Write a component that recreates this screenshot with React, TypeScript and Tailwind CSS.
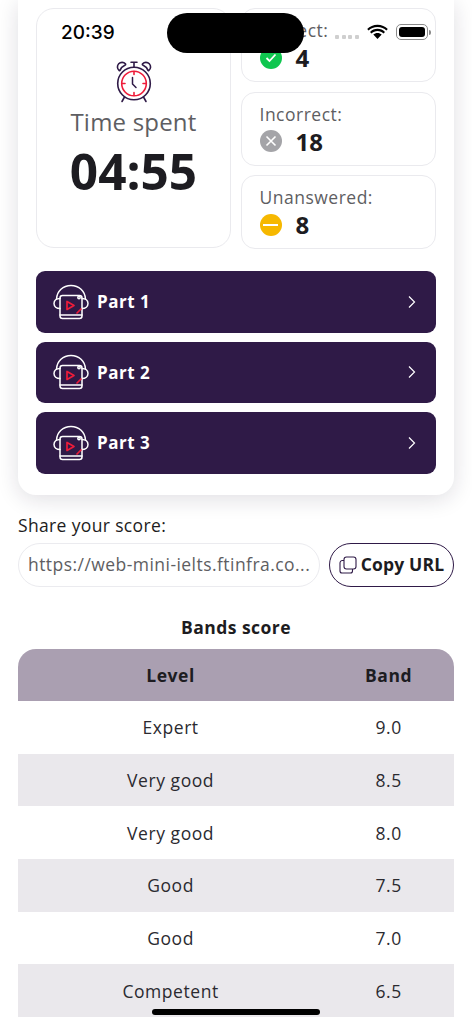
const font = "font-['Open_Sans',sans-serif]";

function Clock() {
  return (
    <svg width="36" height="44" viewBox="0 0 36 44" fill="none" strokeLinecap="round" strokeLinejoin="round">
      <g stroke="#2f1a47" strokeWidth="1.600">
        <circle cx="18" cy="24.500" r="16.300" />
        <path d="M3.200 11.500C1 10 .9 6.700 2.700 4.800c1.800-1.900 5-1.900 6.700-.1.400.5.300 1-.2 1.300-2.400 1.100-4.300 3-5.200 5.400-.2.300-.5.300-.8.100z" />
        <path d="M32.800 11.500c2.200-1.500 2.300-4.800.5-6.700-1.800-1.900-5-1.900-6.700-.1-.4.500-.3 1 .2 1.300 2.400 1.100 4.300 3 5.200 5.400.2.300.5.300.8.100z" />
        <path d="M18 8V3.500M15 3.200h6M8.500 38l-2.500 4.500M27.500 38l2.500 4.500" />
      </g>
      <g stroke="#ee1c3a" strokeWidth="1.600">
        <circle cx="18" cy="24.500" r="12.300" />
        <path d="M18 12.500v3M18 33.500v3M6 24.500h3M27 24.500h3" />
      </g>
      <path d="M16.500 18.500v6.500l3.500 3.500" stroke="#2f1a47" strokeWidth="1.500" />
    </svg>
  );
}

function Headset() {
  return (
    <svg width="38" height="36" viewBox="0 0 38 36" fill="none" strokeLinecap="round" strokeLinejoin="round">
      <g stroke="#fff" strokeWidth="1.500">
        <path d="M4.500 15C5 7 11 1.500 19 1.500S33 7 33.500 15" />
        <path d="M8 14.500c-3.500 0-6 2-6 5s2.500 5 6 5" />
        <path d="M30 14.500c3.500 0 6 2 6 5s-2.500 5-6 5" />
        <path d="M8 14c0-1.500 1-2.500 2.500-2.500H27.500C29 11.500 30 12.500 30 14v18a2.500 2.500 0 0 1-2.500 2.500h-17A2.500 2.500 0 0 1 8 32z" />
        <path d="M8 31h22" />
        <circle cx="27" cy="13.500" r="1.200" />
      </g>
      <path d="M15 17.500v8l7-4z" stroke="#ee1c3a" strokeWidth="1.700" />
      <path d="M25 29l4-4" stroke="#ee1c3a" strokeWidth="1.700" />
    </svg>
  );
}

function Stat({ label, value, color, icon, gap }: { label: string; value: string; color: string; icon: React.ReactNode; gap: string }) {
  return (
    <div className="h-[74px] rounded-[14px] border border-[#eaeaee] pl-[17.500px] pt-[10px]">
      <div className="text-[17.500px] leading-[22px] tracking-[0.5px] text-[#5e5e62]">{label}</div>
      <div className={`flex items-center ${gap}`}>
        <span className={`flex h-[22px] w-[22px] items-center justify-center rounded-full ${color}`}>{icon}</span>
        <span className="text-[24px] font-bold leading-[33px] text-[#1d1c21]">{value}</span>
      </div>
    </div>
  );
}

function PartButton({ name }: { name: string }) {
  return (
    <div className="flex h-[61.500px] items-center rounded-[9px] bg-[#2f1a47] pl-[16px] pr-[19px] text-white">
      <Headset />
      <span className="ml-[7px] text-[17px] font-bold tracking-[0.5px]">{name}</span>
      <svg className="ml-auto" width="10" height="14" viewBox="0 0 10 14" fill="none">
        <path d="M2 1.500 7.500 7 2 12.500" stroke="#fff" strokeWidth="1.200" />
      </svg>
    </div>
  );
}

const rows = [
  ["Expert", "9.0"],
  ["Very good", "8.5"],
  ["Very good", "8.0"],
  ["Good", "7.5"],
  ["Good", "7.0"],
  ["Competent", "6.5"],
];

export default function App() {
  return (
    <div className={`${font} relative h-[1024px] w-[472px] overflow-hidden bg-white text-[#1d1c21]`}>
      <div className="mx-[18px] rounded-b-[18px] bg-white px-[18px] pb-[21px] pt-[8px] shadow-[0_4px_22px_rgba(30,20,50,0.14)]">
        <div className="grid grid-cols-2 gap-[10px]">
          <div className="flex h-[240px] flex-col items-center rounded-[18px] border border-[#eaeaee] pt-[50px]">
            <Clock />
            <div className="mt-[2px] text-[24px] leading-[33px] tracking-[0.2px] text-[#5e5e62]">Time spent</div>
            <div className="mt-[1px] text-[49.500px] font-bold leading-[65px] text-[#1d1c21]">04:55</div>
          </div>
          <div className="flex flex-col gap-[9.500px]">
            <Stat
              label="Correct:"
              value="4"
              gap="gap-[14px]"
              color="bg-[#0fc64f]"
              icon={<svg width="12" height="10" viewBox="0 0 12 10" fill="none"><path d="M1.500 5 4.500 8l6-6.500" stroke="#fff" strokeWidth="1.800" /></svg>}
            />
            <Stat
              label="Incorrect:"
              value="18"
              gap="gap-[14px]"
              color="bg-[#a4a4a8]"
              icon={<svg width="12" height="12" viewBox="0 0 12 12" fill="none"><path d="m1.500 1.500 9 9M10.500 1.500l-9 9" stroke="#fff" strokeWidth="1.600" /></svg>}
            />
            <Stat
              label="Unanswered:"
              value="8"
              gap="gap-[14px]"
              color="bg-[#f6b800]"
              icon={<span className="h-[2px] w-[15px] bg-white" />}
            />
          </div>
        </div>
        <div className="mt-[22px] flex flex-col gap-[9px]">
          <PartButton name="Part 1" />
          <PartButton name="Part 2" />
          <PartButton name="Part 3" />
        </div>
      </div>

      <div className="mx-[18px]">
        <div className="mt-[19px] text-[17.500px] leading-[22px] tracking-[0.35px]">Share your score:</div>
        <div className="mt-[7px] flex justify-between">
          <div className="flex h-[44px] w-[302px] items-center rounded-full border border-[#ebebef] pl-[9px]">
            <span className="whitespace-nowrap text-[17.500px] tracking-[0.45px] text-[#5e5e62]">https://web-mini-ielts.ftinfra.co...</span>
          </div>
          <div className="flex h-[44px] w-[125px] items-center justify-center gap-[4px] rounded-full border border-[#2f1a47]">
            <svg width="18" height="18" viewBox="0 0 18 18" fill="none" stroke="#2f1a47" strokeWidth="1.100">
              <rect x="5" y="1" width="12" height="12" rx="2.500" />
              <path d="M5 4.500H3a2.300 2.300 0 0 0-2 2.300v8.200A2 2 0 0 0 3 17h8.500a2 2 0 0 0 2-2v-2" />
            </svg>
            <span className="text-[17.500px] font-bold tracking-[0.15px]">Copy URL</span>
          </div>
        </div>
        <div className="mt-[27px] text-center text-[17.500px] font-bold leading-[26px] tracking-[0.45px]">Bands score</div>
        <div className="mt-[9px] flex h-[52.500px] items-center rounded-t-[18px] bg-[#aa9fb1] text-[17.500px] font-bold tracking-[0.55px]">
          <div className="w-[70%] text-center">Level</div>
          <div className="w-[30%] text-center">Band</div>
        </div>
        {rows.map(([level, band], i) => (
          <div key={i} className={`flex h-[52.700px] items-center text-[17.500px] tracking-[0.55px] text-[#2b2a30] ${i % 2 ? "bg-[#eae8ec]" : "bg-white"}`}>
            <div className="w-[70%] text-center">{level}</div>
            <div className="w-[30%] text-center">{band}</div>
          </div>
        ))}
      </div>

      {/* device status bar overlay */}
      <div className="absolute left-[167px] top-[13px] h-[40px] w-[137px] rounded-full bg-black" />
      <div className="absolute left-[61px] top-[21px] font-['Inter',sans-serif] text-[19px] font-medium leading-[24px] text-black">20:39</div>
      <div className="absolute left-[335px] top-[35px] flex gap-[2.700px]">
        {[0, 1, 2, 3].map((d) => (
          <span key={d} className="h-[4px] w-[4px] rounded-[1px] bg-[#cfcfcf]" />
        ))}
      </div>
      <svg className="absolute left-[367px] top-[24px]" width="21" height="16" viewBox="0 0 21 16">
        <path d="M10.500 3c3.600 0 6.700 1.300 8.900 3.500l1.400-1.500C18.200 2.400 14.600.8 10.500.8S2.800 2.400.2 5l1.400 1.500C3.800 4.300 6.900 3 10.500 3z" fill="#000" />
        <path d="M10.500 7c2.400 0 4.500.9 6 2.400l1.500-1.500C16 6 13.400 4.800 10.500 4.800S5 6 3 7.900l1.500 1.500C6 7.900 8.100 7 10.500 7z" fill="#000" />
        <path d="M10.500 8.900c-1.700 0-3.100.7-4.200 1.700l4.200 4.400 4.200-4.400c-1.100-1-2.500-1.700-4.200-1.700z" fill="#000" />
      </svg>
      <div className="absolute left-[396px] top-[24px] flex items-center gap-[1px]">
        <div className="h-[16px] w-[32px] rounded-[5px] border border-[#8a8a8a] p-[2px]">
          <div className="h-full w-full rounded-[3px] bg-black" />
        </div>
        <div className="h-[5px] w-[1.500px] rounded-r-full bg-[#8a8a8a]" />
      </div>
      <div className="absolute left-[152px] top-[1009px] h-[6px] w-[168px] rounded-full bg-black" />
    </div>
  );
}
